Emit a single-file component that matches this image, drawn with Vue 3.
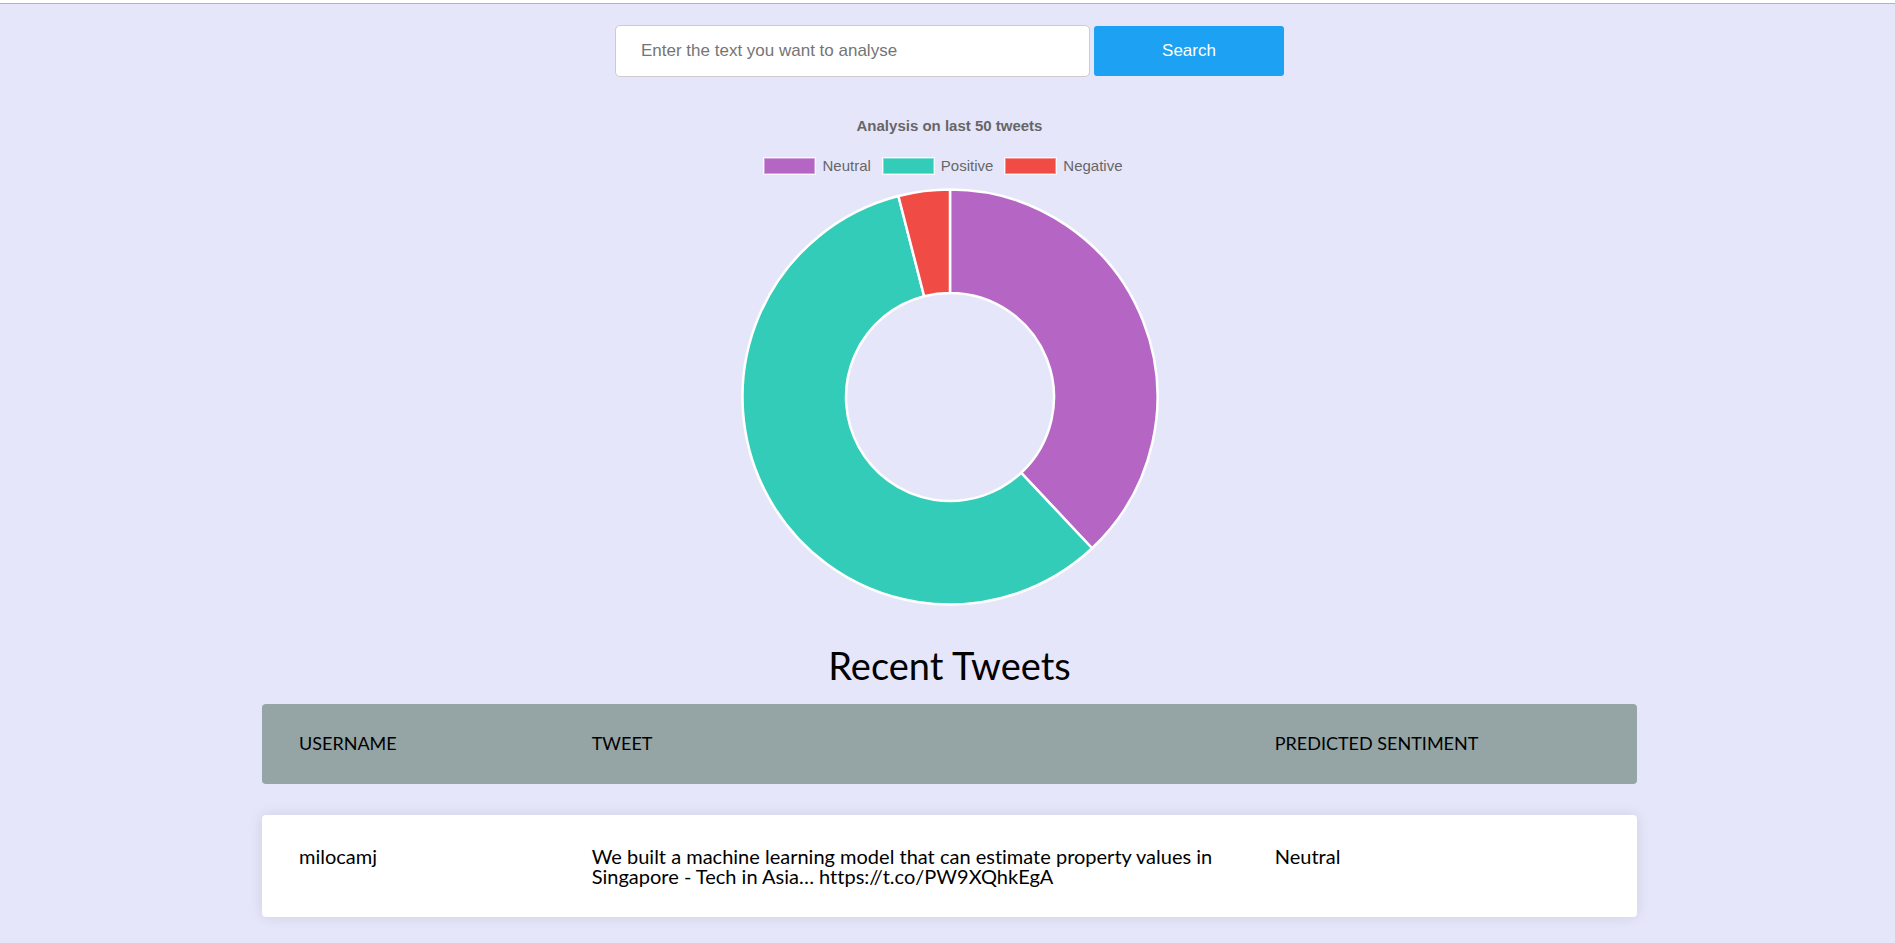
<script setup>
import { ref } from 'vue'

const query = ref('')

const sentiments = [
  { label: 'Neutral', count: 19, tone: 'neutral' },
  { label: 'Positive', count: 29, tone: 'positive' },
  { label: 'Negative', count: 2, tone: 'negative' },
]

const tweets = [
  {
    user: 'milocamj',
    text: 'We built a machine learning model that can estimate property values in Singapore - Tech in Asia… https://t.co/PW9XQhkEgA',
    sentiment: 'Neutral',
  },
]

const CENTER = 210
const OUTER = 207.5
const INNER = 104
const total = sentiments.reduce((sum, s) => sum + s.count, 0)

function point(radius, fraction) {
  const angle = fraction * 2 * Math.PI
  return `${CENTER + radius * Math.sin(angle)} ${CENTER - radius * Math.cos(angle)}`
}

let start = 0
const slices = sentiments.map((s) => {
  const from = start / total
  start += s.count
  const to = start / total
  const large = to - from > 0.5 ? 1 : 0
  return {
    tone: s.tone,
    d: `M${point(OUTER, from)} A${OUTER} ${OUTER} 0 ${large} 1 ${point(OUTER, to)} L${point(INNER, to)} A${INNER} ${INNER} 0 ${large} 0 ${point(INNER, from)} Z`,
  }
})
</script>

<template>
  <div class="page">
    <header class="topbar"></header>
    <main class="content">
      <form class="search" @submit.prevent>
        <input v-model="query" class="search-input" type="text" aria-label="Text to analyse" placeholder="Enter the text you want to analyse" />
        <button class="search-button" type="submit">Search</button>
      </form>

      <section class="chart">
        <h2 class="chart-title">Analysis on last 50 tweets</h2>
        <ul class="legend">
          <li v-for="s in sentiments" :key="s.tone" class="legend-item">
            <span class="swatch" :class="s.tone"></span>
            <span>{{ s.label }}</span>
          </li>
        </ul>
        <svg class="donut" viewBox="0 0 420 420" role="img" aria-label="Sentiment share">
          <path v-for="s in slices" :key="s.tone" class="slice" :class="s.tone" :d="s.d" />
        </svg>
      </section>

      <section class="tweets">
        <h1 class="tweets-title">Recent Tweets</h1>
        <table class="table">
          <thead>
            <tr class="row head">
              <th class="cell" scope="col">Username</th>
              <th class="cell" scope="col">Tweet</th>
              <th class="cell" scope="col">Predicted Sentiment</th>
            </tr>
          </thead>
          <tbody>
            <tr v-for="t in tweets" :key="t.user" class="row card">
              <td class="cell">{{ t.user }}</td>
              <td class="cell">{{ t.text }}</td>
              <td class="cell">{{ t.sentiment }}</td>
            </tr>
          </tbody>
        </table>
      </section>
    </main>
  </div>
</template>

<style>
html,
body {
  background: #e6e6fa;
}
</style>

<style scoped>
.page {
  font-family: Lato, sans-serif;
  font-variant-ligatures: none;
  color: #000;
}

.topbar {
  height: 3px;
  background: #fff;
  border-bottom: 1px solid #b3b3b3;
}

.content {
  display: flex;
  flex-direction: column;
  padding: 21px 0 0 4px;
}

.search {
  display: flex;
  justify-content: center;
  align-items: center;
  gap: 4px;
}

.search-input,
.search-button {
  box-sizing: border-box;
  font-family: "Liberation Sans", Arial, sans-serif;
  font-size: 17px;
  line-height: 20px;
}

.search-input {
  width: 475px;
  padding: 15px 25px;
  border: 1px solid #ccc;
  border-radius: 5px;
  background: #fff;
  color: #333;
}

.search-input::placeholder {
  color: #757575;
  opacity: 1;
}

.search-button {
  width: 190px;
  padding: 15px 0;
  border: 0;
  border-radius: 3px;
  background: #1da1f2;
  color: #fff;
  cursor: pointer;
}

.chart {
  display: flex;
  flex-direction: column;
  align-items: center;
  margin-top: 39px;
  font-family: "Liberation Sans", Arial, sans-serif;
  font-size: 15px;
  line-height: 20px;
  color: #666;
}

.chart-title {
  margin: 0;
  font-size: 15px;
  font-weight: bold;
}

.legend {
  display: flex;
  gap: 12px;
  margin: 20px 12px 0 0;
  padding: 0;
  list-style: none;
}

.legend-item {
  display: flex;
  align-items: center;
  gap: 7px;
}

.swatch {
  box-sizing: border-box;
  width: 51px;
  height: 16px;
  border: 1px solid rgba(255, 255, 255, 0.4);
  outline: 1px solid #f9f9fe;
}

.swatch.neutral {
  background-color: #b565c3;
}

.swatch.positive {
  background-color: #33ccb9;
}

.swatch.negative {
  background-color: #f14b45;
}

.donut {
  width: 420px;
  height: 420px;
  margin-top: 11px;
}

.slice {
  stroke: #fff;
  stroke-width: 2.5;
  stroke-linejoin: bevel;
}

.slice.neutral {
  fill: #b565c3;
}

.slice.positive {
  fill: #33ccb9;
}

.slice.negative {
  fill: #f14b45;
}

.tweets {
  width: 100%;
  max-width: 1375px;
  margin: 35px auto 0;
}

.tweets-title {
  margin: 0 0 16px;
  font-size: 38px;
  line-height: 46px;
  font-weight: normal;
  text-align: center;
}

.table,
.table thead,
.table tbody {
  display: block;
}

.row {
  display: grid;
  grid-template-columns: 9fr 21fr 10fr;
  padding: 31px 37px;
  margin-bottom: 31px;
  border-radius: 4px;
}

.cell {
  padding: 0;
  font-size: 20px;
  line-height: 20px;
  font-weight: normal;
  text-align: left;
}

.head {
  padding: 30px 37px 32px;
  background: #95a5a6;
}

.head .cell {
  font-size: 18px;
  line-height: 18px;
  text-transform: uppercase;
}

.card {
  background: #fff;
  box-shadow: 0 0 14px rgba(0, 0, 0, 0.1);
}
</style>
